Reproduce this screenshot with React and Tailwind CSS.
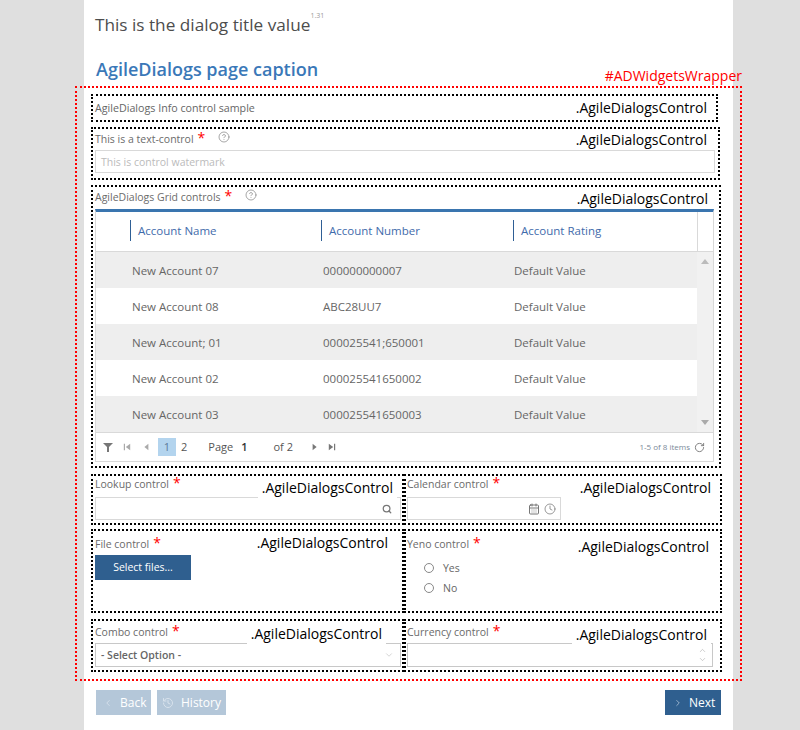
import React from 'react';
import { ChevronLeft, ChevronRight, ChevronUp, ChevronDown, History, Search, CalendarDays, Clock, RotateCw, HelpCircle } from 'lucide-react';

const rows = [
  ['New Account 07', '000000000007', 'Default Value'],
  ['New Account 08', 'ABC28UU7', 'Default Value'],
  ['New Account; 01', '000025541;650001', 'Default Value'],
  ['New Account 02', '000025541650002', 'Default Value'],
  ['New Account 03', '000025541650003', 'Default Value'],
];

const Tag = ({ className = '' }) => (
  <span className={`absolute bg-white px-1 text-[14px] leading-5 text-black ${className}`}>.AgileDialogsControl</span>
);

const Label = ({ children, help, className = '' }) => (
  <div className={`flex items-start text-[10.500px] leading-[14px] text-[#6b6b6b] ${className}`}>
    <span>{children}</span>
    <span className="ml-[4px] -mt-[1px] text-[14px] leading-[14px] text-[#f00]">*</span>
    {help && <HelpCircle className="ml-[13px] -mt-[1px] h-[12px] w-[12px] text-[#8a8a8a]" strokeWidth={1.5} />}
  </div>
);

const Pager = () => (
  <div className="flex h-[28px] items-center bg-white pl-[7px] pr-[8px] text-[11px] text-[#555]">
    <svg viewBox="0 0 10 10" className="h-[10px] w-[10px] fill-[#777]"><path d="M0 1h10L6 5v5H4V5z" /></svg>
    <svg viewBox="0 0 10 10" className="ml-[10px] h-[8px] w-[8px] fill-[#aaa]"><path d="M1 1h1.5v8H1zM9 1v8L3.5 5z" /></svg>
    <svg viewBox="0 0 10 10" className="ml-[11px] h-[8px] w-[8px] fill-[#aaa]"><path d="M8 1v8L3 5z" /></svg>
    <span className="ml-[8px] flex h-[18px] w-[18px] items-center justify-center bg-[#b3d4ee] text-[#5a7a99]">1</span>
    <span className="ml-[5px]">2</span>
    <span className="ml-[21px]">Page</span>
    <span className="ml-[8px] font-semibold text-[#333]">1</span>
    <span className="ml-[26px]">of 2</span>
    <svg viewBox="0 0 10 10" className="ml-[18px] h-[8px] w-[8px] fill-[#777]"><path d="M2 1v8L7 5z" /></svg>
    <svg viewBox="0 0 10 10" className="ml-[9px] h-[8px] w-[8px] fill-[#777]"><path d="M1 1v8l5.500-4zM7.500 1H9v8H7.500z" /></svg>
    <span className="ml-auto text-[8px] text-[#7a8a99]">1-5 of 8 items</span>
    <RotateCw className="ml-[4px] h-[11px] w-[11px] text-[#777]" strokeWidth={2} />
  </div>
);

const Grid = () => (
  <div className="w-[619px] border-x border-b border-[#d9d9d9] border-t-[3px] border-t-[#3a75af]">
    <div className="grid h-[40px] grid-cols-[34px_191px_192px_184px_1fr] items-start border-b border-[#d9d9d9] pt-[8px] text-[11.500px] text-[#3f6bab]">
      <div />
      <div className="flex h-[21px] items-center border-l border-[#2f5f95] pl-[7px]">Account Name</div>
      <div className="flex h-[21px] items-center border-l border-[#2f5f95] pl-[7px]">Account Number</div>
      <div className="flex h-[21px] items-center border-l border-[#2f5f95] pl-[7px]">Account Rating</div>
      <div className="-mt-[8px] h-[39px] border-l border-[#d9d9d9]" />
    </div>
    <div className="flex border-b border-[#d9d9d9]">
      <div className="min-w-0 flex-1">
        {rows.map((r, i) => (
          <div
            key={r[0]}
            className={`grid h-[36px] grid-cols-[36px_191px_191px_1fr] items-center pt-[2px] text-[11.500px] text-[#666] ${i % 2 === 0 ? 'bg-[#eeeeee]' : 'bg-white'}`}
          >
            <div />
            <div>{r[0]}</div>
            <div>{r[1]}</div>
            <div>{r[2]}</div>
          </div>
        ))}
      </div>
      <div className="flex w-[16px] flex-col items-center justify-between bg-[#f1f1f1] py-[7px]">
        <svg viewBox="0 0 8 5" className="h-[5px] w-[8px] fill-[#bbb]"><path d="M0 5l4-5 4 5z" /></svg>
        <svg viewBox="0 0 8 5" className="h-[5px] w-[8px] fill-[#aaa]"><path d="M0 0l4 5 4-5z" /></svg>
      </div>
    </div>
    <Pager />
  </div>
);

export default function App() {
  return (
    <div className="h-[730px] overflow-hidden bg-[#dfdfdf] font-['Open_Sans',sans-serif]">
      <div className="ml-[84px] flex h-full w-[649px] flex-col bg-white">
        <div className="flex h-[56px] items-start pl-[11px] pt-[12px] text-[17.200px] leading-[26px] text-[#4d4d4d]">
          This is the dialog title value
          <sup className="mt-[3px] text-[7px] leading-none text-[#999]">1.31</sup>
        </div>
        <h1 className="h-[30px] pl-[12px] text-[18px] font-semibold leading-[26px] text-[#3a78b8]">AgileDialogs page caption</h1>

        <div className="relative -ml-[9px] h-[595px] w-[667px] border-2 border-dotted border-[#f00] pl-[14px] pt-[6px]">
          <span className="absolute -top-[22px] right-[-2px] text-[14px] leading-5 text-[#f00]">#ADWidgetsWrapper</span>

          <div className="relative flex h-[28px] w-[627px] items-center border-2 border-dotted border-black pl-[2px] pt-[1px] text-[10.700px] text-[#666]">
            AgileDialogs Info control sample
            <Tag className="right-[5px] top-[2px]" />
          </div>

          <div className="relative mt-[5px] h-[53px] w-[629px] border-2 border-dotted border-black pl-[2px]">
            <Label help className="h-[21px] pt-[3px]">This is a text-control</Label>
            <div className="flex h-[23px] w-[620px] items-center border border-[#d9d9d9] pl-[5px] pt-[2px] text-[10.500px] text-[#bbb]">This is control watermark</div>
            <Tag className="right-[7px] top-[1px]" />
          </div>

          <div className="relative mt-[5px] h-[283px] w-[630px] border-2 border-dotted border-black pl-[2px]">
            <Label help className="h-[22px] pt-[3px]">AgileDialogs Grid controls</Label>
            <Grid />
            <Tag className="right-[7px] top-[2px]" />
          </div>

          <div className="mt-[6px] grid w-[631px] grid-cols-[313px_318px]">
            <div className="relative h-[51px] border-2 border-dotted border-black pl-[2px]">
              <Label className="h-[21px] pt-[1px]">Lookup control</Label>
              <div className="flex h-[23px] w-[306px] items-center justify-end border border-[#d9d9d9] pr-[8px]">
                <Search className="h-[10px] w-[10px] text-[#777]" strokeWidth={3} />
              </div>
              <Tag className="right-[5px] top-[2px]" />
            </div>
            <div className="relative h-[51px] border-2 border-dotted border-black pl-[1px]">
              <Label className="h-[21px] pt-[1px]">Calendar control</Label>
              <div className="flex h-[23px] w-[154px] items-center justify-end gap-[4px] border border-[#d9d9d9] pr-[4px]">
                <CalendarDays className="h-[12px] w-[12px] text-[#777]" strokeWidth={2} />
                <Clock className="h-[12px] w-[12px] text-[#777]" strokeWidth={1.5} />
              </div>
              <Tag className="right-[5px] top-[2px]" />
            </div>
          </div>

          <div className="mt-[4px] grid w-[631px] grid-cols-[313px_318px]">
            <div className="relative h-[84px] border-2 border-dotted border-black pl-[2px]">
              <Label className="h-[24px] pt-[6px]">File control</Label>
              <div className="flex h-[25px] w-[96px] items-center justify-center bg-[#2f5f8f] text-[10.500px] font-medium text-white">Select files...</div>
              <Tag className="right-[10px] top-[2px]" />
            </div>
            <div className="relative h-[84px] border-2 border-dotted border-black pl-[1px]">
              <Label className="h-[24px] pt-[6px]">Yeno control</Label>
              <div className="flex flex-col gap-[5px] pl-[17px] pt-[5px] text-[10.500px] text-[#666]">
                <div className="flex h-[15px] items-center gap-[9px]"><span className="h-[10px] w-[10px] rounded-full border border-[#888]" /><span className="pt-[2px]">Yes</span></div>
                <div className="flex h-[15px] items-center gap-[9px]"><span className="h-[10px] w-[10px] rounded-full border border-[#888]" /><span className="pt-[2px]">No</span></div>
              </div>
              <Tag className="right-[7px] top-[6px]" />
            </div>
          </div>

          <div className="mt-[6px] grid w-[631px] grid-cols-[313px_318px]">
            <div className="relative h-[53px] border-2 border-dotted border-black pl-[2px]">
              <Label className="h-[22px] pt-[4px]">Combo control</Label>
              <div className="flex h-[24px] w-[306px] items-center justify-between border border-[#c8c8c8] pl-[5px] pr-[6px] text-[10.500px] font-semibold text-[#666]">
                <span className="pt-[2px]">- Select Option -</span>
                <ChevronDown className="h-[10px] w-[10px] text-[#bbb]" strokeWidth={1.5} />
              </div>
              <Tag className="right-[16px] top-[3px]" />
            </div>
            <div className="relative h-[53px] border-2 border-dotted border-black pl-[1px]">
              <Label className="h-[22px] pt-[4px]">Currency control</Label>
              <div className="flex h-[24px] w-[306px] flex-col items-end justify-center border border-[#c8c8c8] pr-[5px]">
                <ChevronUp className="h-[9px] w-[9px] text-[#aaa]" strokeWidth={1.5} />
                <ChevronDown className="h-[9px] w-[9px] text-[#aaa]" strokeWidth={1.5} />
              </div>
              <Tag className="right-[9px] top-[4px]" />
            </div>
          </div>
        </div>

        <div className="mt-[9px] flex px-[12px] text-[12px] text-white">
          <button className="flex h-[25px] w-[55px] items-center gap-[7px] bg-[#b4c7d9] pl-[7px]">
            <ChevronLeft className="h-[10px] w-[10px] text-[#d8e2ec]" /> Back
          </button>
          <button className="ml-[6px] flex h-[25px] w-[69px] items-center gap-[7px] bg-[#b4c7d9] pl-[5px]">
            <History className="h-[12px] w-[12px] text-[#d8e2ec]" /> History
          </button>
          <button className="ml-auto flex h-[25px] w-[56px] items-center gap-[6px] bg-[#2f5f8f] pl-[8px]">
            <ChevronRight className="h-[10px] w-[10px] text-[#a9c0d6]" /> Next
          </button>
        </div>
      </div>
    </div>
  );
}
